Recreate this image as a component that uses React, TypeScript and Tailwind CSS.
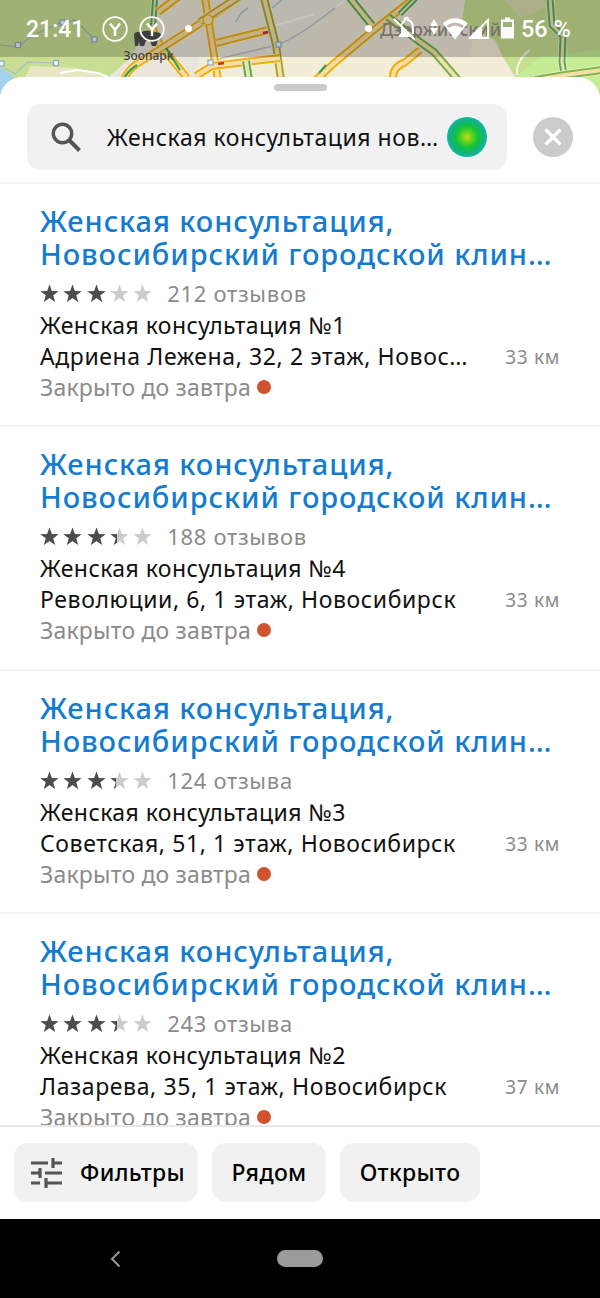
const places = [
  {
    name: "Женская консультация №1",
    address: "Адриена Лежена, 32, 2 этаж, Новос…",
    reviews: "212 отзывов",
    distance: "33 км",
    rating: 3.08,
  },
  {
    name: "Женская консультация №4",
    address: "Революции, 6, 1 этаж, Новосибирск",
    reviews: "188 отзывов",
    distance: "33 км",
    rating: 3.35,
  },
  {
    name: "Женская консультация №3",
    address: "Советская, 51, 1 этаж, Новосибирск",
    reviews: "124 отзыва",
    distance: "33 км",
    rating: 3.3,
  },
  {
    name: "Женская консультация №2",
    address: "Лазарева, 35, 1 этаж, Новосибирск",
    reviews: "243 отзыва",
    distance: "37 км",
    rating: 3.35,
  },
];

const starPath =
  "M9.5 0.5 L11.8 7 L18.6 7.2 L13.2 11.3 L15.1 18 L9.5 14.1 L3.9 18 L5.8 11.3 L0.4 7.2 L7.2 7 Z";

const Star = ({ fill }: { fill: number }) => (
  <div className="relative h-[19px] w-[19px]">
    <svg className="h-[19px] w-[19px]" viewBox="0 0 19 19" fill="#cccccc">
      <path d={starPath} />
    </svg>
    <div
      className="absolute top-0 left-0 h-[19px] overflow-hidden"
      style={{ width: `${fill * 19}px` }}
    >
      <svg className="h-[19px] w-[19px] max-w-none" viewBox="0 0 19 19" fill="#4d4d4d">
        <path d={starPath} />
      </svg>
    </div>
  </div>
);

// roads are drawn as a wide pale bed with two coloured traffic lanes on top
const Road = ({ d, color = "#efae14", gap = 4 }: { d: string; color?: string; gap?: number }) => (
  <g fill="none">
    <path d={d} stroke="#fbf0c0" strokeWidth={gap + 5.5} />
    <path d={d} stroke={color} strokeWidth={gap + 4} />
    <path d={d} stroke="#f6dfa6" strokeWidth={gap} />
  </g>
);

const MapView = () => (
  <svg className="absolute inset-0 h-[110px] w-[600px]" viewBox="0 0 600 110">
    <rect width="600" height="110" fill="#f3ecd6" />
    <path d="M155 0 H480 L470 57 H140 Z" fill="#efe6d8" />
    <path d="M200 0 H345 L290 57 H205 Z" fill="#eae6dc" />
    <path d="M120 57 L155 30 L200 57 L190 110 H90 Z" fill="#eae6dc" />
    <path d="M0 0 H158 L150 25 L128 60 L105 80 H0 Z" fill="#c8de92" />
    <path d="M30 66 L75 68 L110 78 H25 Z" fill="#e9e6c6" />
    <path d="M465 0 H600 V110 H517 V80 L503 57 L495 40 L462 22 Z" fill="#c6de90" />
    <path d="M505 0 H545 V8 L520 18 Z" fill="#d9dca8" />
    <path d="M540 57 L600 50 V110 H517 V75 Z" fill="#c4ec94" />
    <path d="M0 67 L12 75 L22 95 H0 Z" fill="#a2d2ee" />
    <path d="M0 45 L18 47 L32 36 L57 24 L75 20 L96 41" fill="none" stroke="#9db6b0" strokeWidth="1.2" />
    <path d="M5 68 L15 74 L28 62 L57 63" fill="none" stroke="#a9bcc6" strokeWidth="1.2" />
    <path d="M60 73 L78 70 L98 73 L108 77" fill="none" stroke="#fff" strokeWidth="2" />
    <path d="M214 60 L277 45 Q300 37 345 0" fill="none" stroke="#b9bcc0" strokeWidth="1.4" />
    <path d="M236 22 Q240 12 248 8 M272 8 L282 0" fill="none" stroke="#a9c5d8" strokeWidth="1.6" />
    <path d="M270 27 L315 14 M345 0 L335 8 M517 75 Q516 60 530 50" fill="none" stroke="#f8f5ee" strokeWidth="2" />
    <Road d="M155 0 L153 26" color="#4cae67" gap={2} />
    <Road d="M152 27 L160 45 L187 78" />
    <Road d="M158 12 L178 -3" />
    <Road d="M124 80 Q128 68 143 60 L215 14 L238 -2" />
    <path d="M124 80 Q126 72 137 65 M166 48 L180 70" fill="none" stroke="#32a257" strokeWidth="2.200" />
    <Road d="M205 -2 L218 80" />
    <Road d="M200 22 L240 -4" color="#c8ab35" />
    <Road d="M216 43 L268 30" />
    <Road d="M264 -2 L276 45 L281 80" color="#a2a640" />
    <Road d="M196 76 L212 66 L280 58" />
    <Road d="M246 61 L249 80" color="#4cae67" />
    <Road d="M350 -2 L375 29" color="#5aab57" />
    <Road d="M316 80 L332 65 L375 29 L412 0" />
    <Road d="M388 17 L420 42 L434 52 L460 82" color="#6eae58" />
    <Road d="M398 68 L420 50" />
    <Road d="M393 80 Q392 68 403 63" />
    <Road d="M400 14 L416 -2" color="#4cae67" gap={2} />
    <Road d="M550 -2 L552 25 L563 36 L562 62 L565 80" color="#4cae67" gap={3} />
    <Road d="M535 80 L565 75 L602 70" color="#7bb552" />
    <path d="M319 73 L326 65" stroke="#32a257" strokeWidth="2" />
    <path d="M263 33 L268 32 M218 64 L224 63" stroke="#c92a35" strokeWidth="2.4" />
    <circle cx="208" cy="20" r="5" fill="#fbe3a4" stroke="#f0b41e" strokeWidth="1.6" />
    <g fill="#eaf4fb" stroke="#8eabc4" strokeWidth="1.3">
      <rect x="15.500" y="42.500" width="5" height="5" />
      <rect x="60" y="20" width="5" height="5" />
      <rect x="92" y="37" width="5" height="5" />
      <rect x="53.500" y="60.500" width="5" height="5" />
      <rect x="-1" y="61" width="5" height="5" />
      <rect x="276" y="42" width="5" height="5" />
      <rect x="208" y="60" width="5" height="5" />
    </g>
  </svg>
);

const MapLabels = () => (
  <svg className="absolute inset-0 h-[77px] w-[600px]" viewBox="0 0 600 77">
    {/* zoo bear */}
    <path
      d="M134 34 Q136 31 141 32 Q148 29 155 32 L160 33 L162 37 L158 40 L156 46 H152 L150 41 L146 41 L144 46 H140 L139 42 L138 46 H135 Z"
      fill="#3f403c"
    />
    <text x="123.500" y="60" fontSize="12.500" textLength="50" lengthAdjust="spacingAndGlyphs" fill="#444" fontFamily="Noto Sans, sans-serif">
      Зоопарк
    </text>
    <text x="380" y="36" fontSize="18" textLength="121" lengthAdjust="spacingAndGlyphs" fill="#77726a" fontFamily="Noto Sans, sans-serif">
      Дзержинский
    </text>
  </svg>
);

const ClockY = () => (
  <svg className="h-[26px] w-[26px]" viewBox="0 0 26 26" fill="none" stroke="#fff">
    <circle cx="13" cy="13" r="11.800" strokeWidth="1.800" />
    <path d="M8 7.500 L13 13.500 L18 7.500 M13 13.500 V20" strokeWidth="2.500" />
  </svg>
);

const StatusBar = () => (
  <div className="relative flex h-[57px] items-center bg-black/20 font-[Roboto,sans-serif] text-[24px] font-medium text-white">
    <MapLabels />
    <span className="relative ml-[26px] w-[76px] pt-[3px] text-[23px]">21:41</span>
    <div className="relative flex gap-[11px]">
      <ClockY />
      <ClockY />
    </div>
    <div className="relative ml-[20px] h-[7px] w-[7px] rounded-full bg-white" />
    <div className="relative ml-[173px] h-[7px] w-[7px] rounded-full bg-white" />
    <svg className="relative ml-[21px] h-[28px] w-[124px]" viewBox="0 0 124 28" fill="#fff">
      {/* bell off */}
      <path d="M8 10 L12 5 V3.500 Q13.500 2 15 3.500 V5 Q20 7 20 12 V19" fill="none" stroke="#fff" strokeWidth="2" />
      <path d="M8 9 V18 L6 20.500 V22 H18 Z" />
      <path d="M1 4 L22 25" stroke="#fff" strokeWidth="2" />
      {/* mobile data arrows */}
      <path d="M41 4 L45 11 H37 Z M41 20 L45 13 H37 Z" />
      {/* wifi */}
      <path d="M51 8.500 Q62 0 73.500 8.500 L62 23 Z" fill="none" stroke="#fff" strokeWidth="1.800" />
      <path d="M51 8.500 Q62 0 73.500 8.500 L71.500 11 Q62 4 53 11 Z" />
      <path d="M54.500 13 Q62 8 69.500 13 L62 23.500 Z" />
      {/* signal */}
      <path d="M77 23 L95 5 V23 Z" fill="none" stroke="#fff" strokeWidth="1.800" />
      <path d="M76 23.500 L89 10.500 V23.500 Z" />
      {/* battery */}
      <path d="M108 4.500 H112 V2.500 H117 V4.500 H121 V23.500 H108 Z" fillOpacity="0.950" />
      <path d="M110 7 H119 V12 H110 Z" fill="#9fb176" />
    </svg>
    <span className="relative ml-[4px] pt-[3px] text-[23.500px] whitespace-nowrap">56 %</span>
  </div>
);

const SearchHeader = () => (
  <div className="flex h-[80px] shrink-0 items-start border-b-2 border-[#f2f2f2] pl-[27px]">
    <div className="flex h-[66px] w-[480px] items-center rounded-[14px] bg-[#f1f1f1] pl-[23px]">
      <svg className="h-[32px] w-[32px] shrink-0" viewBox="0 0 32 32" fill="none" stroke="#555" strokeWidth="3.400">
        <circle cx="12.500" cy="12.500" r="9.200" />
        <path d="M19 19 L29.500 29.500" strokeWidth="4" />
      </svg>
      <span className="ml-[25px] w-[340px] shrink-0 text-[23px] tracking-[0.53px] whitespace-nowrap text-[#111]">
        Женская консультация нов…
      </span>
      <div className="h-[40px] w-[40px] shrink-0 rounded-full bg-[radial-gradient(circle,#c8d41a_0%,#5fd31c_20%,#12c23c_38%,#12b27c_58%,#12b6b0_72%)]" />
    </div>
    <div className="mt-[13px] ml-[26px] flex h-[40px] w-[40px] items-center justify-center rounded-full bg-[#cbcbcb]">
      <svg className="h-[18px] w-[18px]" viewBox="0 0 18 18" stroke="#fff" strokeWidth="3.200">
        <path d="M1.500 1.500 L16.500 16.500 M16.500 1.500 L1.500 16.500" />
      </svg>
    </div>
  </div>
);

const App = () => {
  return (
    <div className="relative flex h-[1298px] w-[600px] flex-col overflow-hidden bg-white font-['Noto_Sans',sans-serif]">
      <header className="relative h-[77px] shrink-0">
        <MapView />
        <StatusBar />
      </header>

      <main className="relative flex h-[1048px] shrink-0 flex-col overflow-hidden rounded-t-[22px] bg-white">
        <div className="mx-auto mt-[7px] mb-[13px] h-[7px] w-[53px] shrink-0 rounded-full bg-[#cbcbcb]" />
        <SearchHeader />
        {places.map((place) => (
          <article
            key={place.name}
            className="h-[243.300px] shrink-0 border-b-2 border-[#f2f2f2] pt-[20px] pl-[40px]"
          >
            <h2 className="text-[29px] leading-[33px] font-medium tracking-[0.92px] whitespace-nowrap text-[#147cd0]">
              Женская консультация,
              <br />
              Новосибирский городской клин…
            </h2>
            <div className="flex h-[40px] items-center pt-[7px]">
              <div className="flex gap-[4.300px]">
                {[0, 1, 2, 3, 4].map((i) => (
                  <Star key={i} fill={Math.max(0, Math.min(1, place.rating - i))} />
                ))}
              </div>
              <span className="ml-[15px] text-[22px] tracking-[0.7px] text-[#8b8b8b]">{place.reviews}</span>
            </div>
            <p className="w-fit text-[23px] leading-[30px] tracking-[0.42px] whitespace-nowrap text-[#111]">
              {place.name}
            </p>
            <div className="flex items-center justify-between pr-[40px] leading-[30px] whitespace-nowrap">
              <span className="text-[23px] tracking-[0.6px] text-[#111]">{place.address}</span>
              <span className="pt-[2px] text-[19px] tracking-[0.7px] text-[#8b8b8b]">{place.distance}</span>
            </div>
            <div className="flex items-center gap-[6px] text-[23px] leading-[30px] tracking-[0.2px] text-[#8b8b8b]">
              <span>Закрыто до завтра</span>
              <span className="h-[14px] w-[14px] rounded-full bg-[#d0532f]" />
            </div>
          </article>
        ))}
      </main>

      <footer className="relative flex h-[94px] shrink-0 gap-[14px] border-t-2 border-[#e8e8e8] bg-white pt-[16px] pl-[14px] text-[23px] font-medium tracking-[0.35px] text-black">
        <button className="flex h-[59px] w-[184px] items-center rounded-[14px] bg-[#f1f1f1] pl-[16px]">
          <svg className="h-[32px] w-[32px]" viewBox="0 0 32 32" stroke="#555" strokeWidth="3.200">
            <path d="M1 6 H18 M23 1 V11 M23 6 H32 M1 16 H10 M10 11 V21 M15 16 H32 M1 26 H10 M16 21 V31 M16 26 H32" />
          </svg>
          <span className="ml-[18px]">Фильтры</span>
        </button>
        <button className="h-[59px] w-[114px] rounded-[14px] bg-[#f1f1f1]">Рядом</button>
        <button className="h-[59px] w-[140px] rounded-[14px] bg-[#f1f1f1]">Открыто</button>
      </footer>

      <nav className="flex h-[79px] shrink-0 items-center bg-black pl-[110px]">
        <svg className="h-[18px] w-[11px]" viewBox="0 0 11 18" fill="none" stroke="#999" strokeWidth="2">
          <path d="M9.500 1.500 L2 9 L9.500 16.500" />
        </svg>
        <div className="ml-[156px] h-[17px] w-[46px] rounded-full bg-[#9b9b9b]" />
      </nav>
    </div>
  );
};

export default App;
